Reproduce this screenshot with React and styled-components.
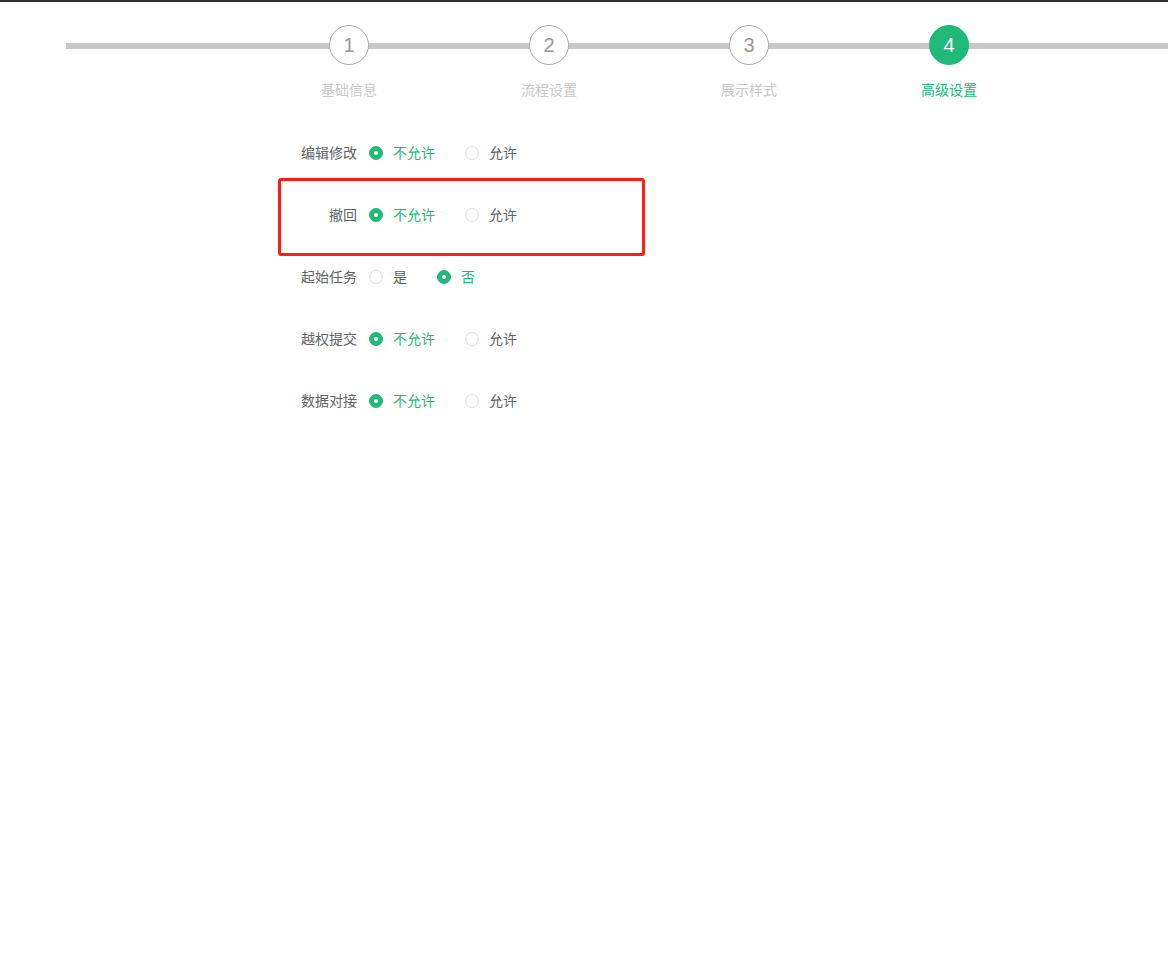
import React, { useState } from 'react';
import styled, { createGlobalStyle, css } from 'styled-components';

const GREEN = '#21b97a';

const GlobalStyle = createGlobalStyle`
  html, body {
    margin: 0;
    padding: 0;
    background: #fff;
    font-family: "Noto Sans CJK SC", "Liberation Sans", sans-serif;
  }
`;

const Page = styled.div`
  border-top: 2px solid #2e2e2e;
  min-height: 962px;
  background: #fff;
`;

const StepsWrap = styled.div`
  padding: 23px 0 0 66px;
`;

const StepsBar = styled.div`
  display: flex;
  padding-left: 183px;
  background: linear-gradient(#c8c8c8, #c8c8c8) no-repeat;
  background-size: 100% 6px;
  background-position: 0 18px;
`;

const Step = styled.div`
  width: 200px;
  display: flex;
  flex-direction: column;
  align-items: center;
`;

const Circle = styled.div`
  width: 40px;
  height: 40px;
  box-sizing: border-box;
  border-radius: 50%;
  display: flex;
  align-items: center;
  justify-content: center;
  font-family: "Liberation Sans", sans-serif;
  font-size: 20px;
  background: ${(p) => (p.$active ? GREEN : '#fff')};
  color: ${(p) => (p.$active ? '#fff' : '#999')};
  border: 1px solid ${(p) => (p.$active ? GREEN : '#aaa')};
`;

const StepLabel = styled.div`
  margin-top: 15px;
  font-size: 14px;
  line-height: 18px;
  color: ${(p) => (p.$active ? GREEN : '#c8c8c8')};
`;

const Form = styled.div`
  padding: 38px 0 0 277px;
`;

const Row = styled.div`
  position: relative;
  display: flex;
  align-items: center;
  height: 32px;
  margin-bottom: 30px;
  ${(p) =>
    p.$marked &&
    css`
      &::after {
        content: '';
        position: absolute;
        left: 1px;
        top: -20px;
        width: 361px;
        height: 72px;
        border: 3px solid #ff1d14;
        border-radius: 3px;
        pointer-events: none;
      }
    `}
`;

const Label = styled.div`
  width: 80px;
  padding-right: 12px;
  text-align: right;
  font-size: 14px;
  color: #606266;
`;

const Option = styled.label`
  display: flex;
  align-items: center;
  margin-right: 30px;
  cursor: pointer;
  font-size: 14px;
  color: ${(p) => (p.$checked ? GREEN : '#606266')};
`;

const Dot = styled.span`
  width: 14px;
  height: 14px;
  box-sizing: border-box;
  border-radius: 50%;
  margin-right: 10px;
  margin-top: 1px;
  display: flex;
  align-items: center;
  justify-content: center;
  border: 1px solid ${(p) => (p.$checked ? GREEN : '#dcdfe6')};
  background: ${(p) => (p.$checked ? GREEN : '#fff')};

  &::after {
    content: '';
    width: 4px;
    height: 4px;
    border-radius: 50%;
    background: #fff;
    display: ${(p) => (p.$checked ? 'block' : 'none')};
  }
`;

const steps = ['基础信息', '流程设置', '展示样式', '高级设置'];

const initialRows = [
  { key: 'edit', label: '编辑修改', options: ['不允许', '允许'], value: 0 },
  { key: 'revoke', label: '撤回', options: ['不允许', '允许'], value: 0, marked: true },
  { key: 'start', label: '起始任务', options: ['是', '否'], value: 1 },
  { key: 'over', label: '越权提交', options: ['不允许', '允许'], value: 0 },
  { key: 'data', label: '数据对接', options: ['不允许', '允许'], value: 0 },
];

const App = () => {
  const [rows, setRows] = useState(initialRows);
  const current = 3;

  const pick = (key, idx) => {
    setRows(rows.map((r) => (r.key === key ? { ...r, value: idx } : r)));
  };

  return (
    <Page>
      <GlobalStyle />
      <StepsWrap>
        <StepsBar>
          {steps.map((s, i) => (
            <Step key={s}>
              <Circle $active={i === current}>{i + 1}</Circle>
              <StepLabel $active={i === current}>{s}</StepLabel>
            </Step>
          ))}
        </StepsBar>
      </StepsWrap>
      <Form>
        {rows.map((r) => (
          <Row key={r.key} $marked={r.marked}>
            <Label>{r.label}</Label>
            {r.options.map((o, i) => (
              <Option key={o} $checked={r.value === i} onClick={() => pick(r.key, i)}>
                <Dot $checked={r.value === i} />
                {o}
              </Option>
            ))}
          </Row>
        ))}
      </Form>
    </Page>
  );
};

export default App;
